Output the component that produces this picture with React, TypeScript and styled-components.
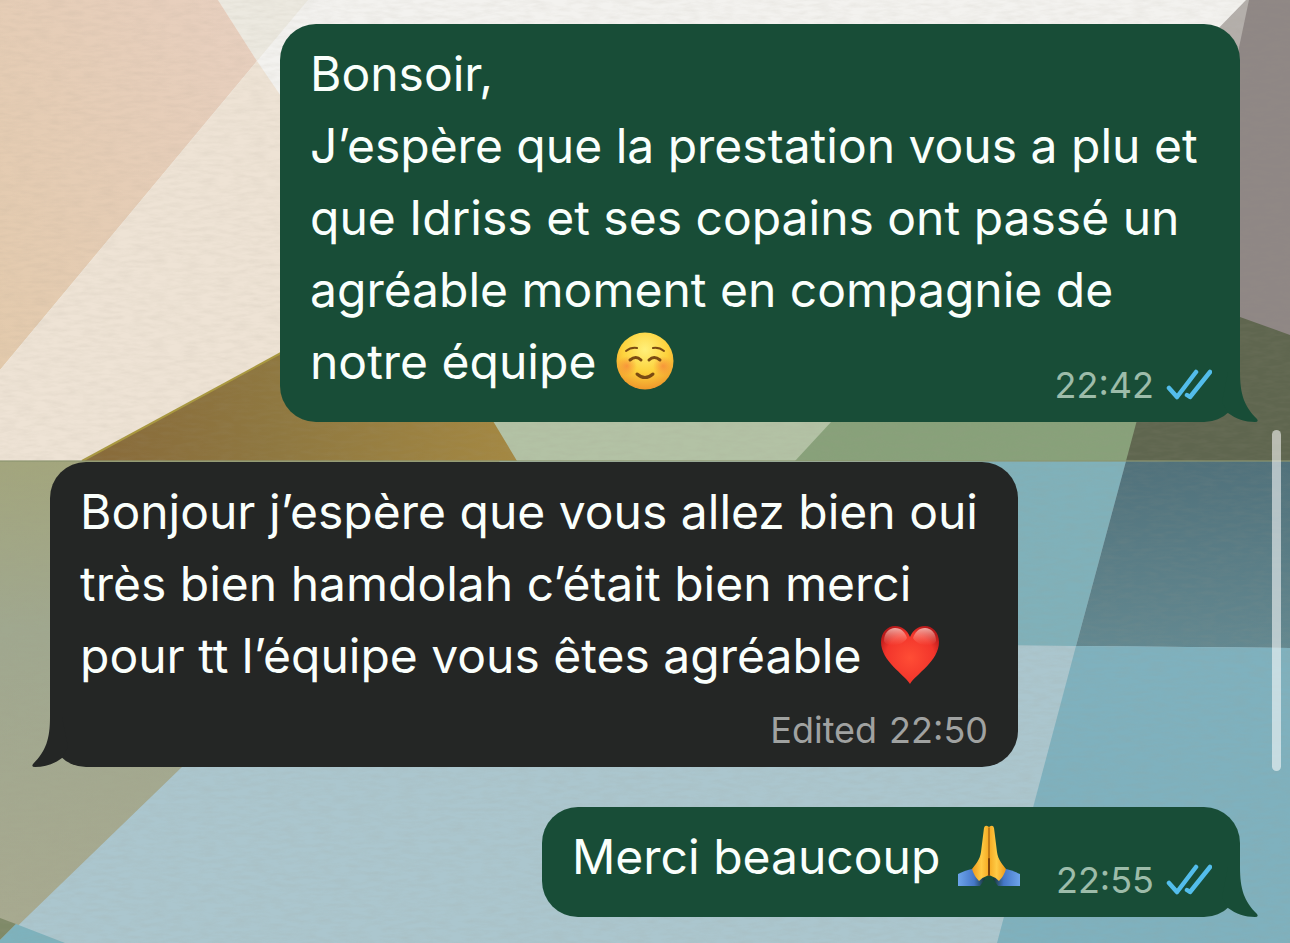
import React from "react";
import styled, { createGlobalStyle } from "styled-components";

const GlobalStyle = createGlobalStyle`
  * { box-sizing: border-box; }
  html, body { margin: 0; padding: 0; }
  body { background: #abc5cd; }
`;

const OUT = "#184d37";
const IN = "#242625";

const Screen = styled.main`
  position: relative;
  min-height: 100vh;
  overflow: hidden;
  font-family: Inter, "Liberation Sans", sans-serif;
`;

const Wallpaper = styled.svg`
  position: absolute;
  inset: 0;
  width: 100%;
  height: 100%;
`;

const Thread = styled.ol`
  position: relative;
  display: flex;
  flex-direction: column;
  gap: 40px;
  margin: 0;
  padding: 24px 50px 26px;
  list-style: none;
`;

const Bubble = styled.li<{ $mine?: boolean; $width: number }>`
  position: relative;
  display: grid;
  grid-template-columns: minmax(0, 1fr);
  align-self: ${(p) => (p.$mine ? "flex-end" : "flex-start")};
  width: min(${(p) => p.$width}px, 100%);
  padding: 14px ${(p) => (p.$mine ? 28 : 30)}px 14px 30px;
  border-radius: 36px;
  background: ${(p) => (p.$mine ? OUT : IN)};
`;

const Message = styled.p<{ $stacked?: boolean }>`
  grid-area: 1 / 1;
  margin: 0;
  padding-bottom: ${(p) => (p.$stacked ? 15 : 10)}px;
  color: #fafffc;
  font-size: 48px;
  line-height: 72px;
  white-space: nowrap;
`;

const Meta = styled.div<{ $mine?: boolean; $stacked?: boolean }>`
  grid-area: ${(p) => (p.$stacked ? 2 : 1)} / 1;
  place-self: end;
  display: flex;
  align-items: center;
  gap: 12px;
  color: ${(p) => (p.$mine ? "#9dbcaa" : "#a0a2a1")};
  font-size: 36px;
  line-height: 46px;
`;

const TailShape = styled.svg<{ $mine?: boolean }>`
  position: absolute;
  bottom: 0;
  ${(p) => (p.$mine ? "right: -18px;" : "left: -18px; transform: scaleX(-1);")}
  width: 40px;
  height: 50px;
`;

const Emoji = styled.svg`
  width: 62px;
  height: 62px;
  margin-left: 4px;
  vertical-align: -13px;
`;

const Ticks = styled.svg`
  width: 46px;
  height: 32px;
`;

const ScrollThumb = styled.div`
  position: absolute;
  top: 430px;
  right: 9px;
  width: 9px;
  height: 341px;
  border-radius: 5px;
  background: rgba(255, 255, 255, 0.56);
`;

const Tail = ({ mine }: { mine?: boolean }) => (
  <TailShape $mine={mine} viewBox="0 0 40 50" aria-hidden="true">
    <path
      d="M22 0C22 22 26 34 39 47Q41 50 37 50C27 50 18 47 10 41L4 30L10 0Z"
      fill={mine ? OUT : IN}
    />
  </TailShape>
);

const ReadTicks = () => (
  <Ticks viewBox="0 0 46 32" role="img" aria-label="Lu">
    <g fill="none" stroke="#53bdeb" strokeWidth="4.500" strokeLinecap="round" strokeLinejoin="round">
      <path d="M3 19L11 28L30 3" />
      <path d="M21 26L24 28L44 3" />
    </g>
  </Ticks>
);

const Smile = () => (
  <Emoji viewBox="0 0 62 62" role="img" aria-label="Visage souriant">
    <defs>
      <radialGradient id="face" cx="50%" cy="30%" r="72%">
        <stop offset="0" stopColor="#fff07a" />
        <stop offset="0.55" stopColor="#fdd23c" />
        <stop offset="1" stopColor="#ee942a" />
      </radialGradient>
      <radialGradient id="cheek">
        <stop offset="0" stopColor="#f5793a" stopOpacity="0.65" />
        <stop offset="1" stopColor="#f5793a" stopOpacity="0" />
      </radialGradient>
    </defs>
    <circle cx="31" cy="31" r="28.500" fill="url(#face)" />
    <circle cx="13" cy="36" r="10" fill="url(#cheek)" />
    <circle cx="49" cy="36" r="10" fill="url(#cheek)" />
    <g fill="none" stroke="#7a4a12" strokeLinecap="round">
      <path d="M12 21Q17 17 23 18" strokeWidth="2" />
      <path d="M39 18Q45 17 50 21" strokeWidth="2" />
      <path d="M16 30Q22 25 27 30" strokeWidth="3" />
      <path d="M35 30Q40 25 46 30" strokeWidth="3" />
      <path d="M23 44Q31 51 39 44" strokeWidth="3" />
    </g>
  </Emoji>
);

const Heart = () => (
  <Emoji viewBox="0 0 62 62" role="img" aria-label="Cœur rouge">
    <defs>
      <radialGradient id="heart" cx="50%" cy="55%" r="60%">
        <stop offset="0" stopColor="#ff4d35" />
        <stop offset="0.7" stopColor="#f2352b" />
        <stop offset="1" stopColor="#b8191a" />
      </radialGradient>
      <linearGradient id="gloss" x1="0" y1="0" x2="0" y2="1">
        <stop offset="0" stopColor="#ffd8d0" stopOpacity="0.75" />
        <stop offset="1" stopColor="#ff9a88" stopOpacity="0" />
      </linearGradient>
    </defs>
    <path
      d="M31 60C25 50 2 37 2 18C2 8 9 2 16 2C23 2 28 6 31 13C34 6 39 2 46 2C53 2 60 8 60 18C60 37 37 50 31 60Z"
      fill="url(#heart)"
    />
    <path d="M5 17C5 9 10 4 16 4C22 4 26 8 28 14C24 22 8 24 5 17Z" fill="url(#gloss)" />
    <path d="M57 17C57 9 52 4 46 4C40 4 36 8 34 14C38 22 54 24 57 17Z" fill="url(#gloss)" />
  </Emoji>
);

const Hands = () => (
  <Emoji viewBox="0 0 62 62" role="img" aria-label="Mains jointes">
    <defs>
      <linearGradient id="skin" x1="0" y1="0" x2="1" y2="0">
        <stop offset="0" stopColor="#ee981c" />
        <stop offset="0.55" stopColor="#ffcb45" />
        <stop offset="1" stopColor="#f5a922" />
      </linearGradient>
      <linearGradient id="sleeve" x1="0" y1="0" x2="1" y2="0">
        <stop offset="0" stopColor="#6da4ea" />
        <stop offset="0.6" stopColor="#4577c8" />
        <stop offset="1" stopColor="#16342f" />
      </linearGradient>
    </defs>
    <g id="hand">
      <path d="M0 49Q8 45 14 44L27 54L22 61H0Z" fill="url(#sleeve)" />
      <path
        d="M31 2Q27 -1 26 3L23 27C22 35 17 40 14 44Q16 51 21 56Q25 52 31 50Z"
        fill="url(#skin)"
      />
    </g>
    <use href="#hand" transform="translate(62 0) scale(-1 1)" />
    <path d="M31 3V50" stroke="#b26c12" strokeWidth="1.500" strokeLinecap="round" />
    <path d="M31 34V50" stroke="#7c430c" strokeWidth="2" strokeLinecap="round" />
  </Emoji>
);

const Background = () => (
  <Wallpaper viewBox="0 0 1290 943" preserveAspectRatio="none" aria-hidden="true">
    <defs>
      <linearGradient id="peach" x1="0" y1="1" x2="1" y2="0">
        <stop offset="0" stopColor="#e3caac" />
        <stop offset="1" stopColor="#e8d0c0" />
      </linearGradient>
      <linearGradient id="brown" x1="0" y1="0" x2="1" y2="0">
        <stop offset="0" stopColor="#886a3a" />
        <stop offset="0.45" stopColor="#8f7840" />
        <stop offset="1" stopColor="#a48842" />
      </linearGradient>
      <linearGradient id="moss" x1="0" y1="0" x2="0" y2="1">
        <stop offset="0" stopColor="#a3a67d" />
        <stop offset="0.35" stopColor="#a0a88f" />
        <stop offset="1" stopColor="#a8aa90" />
      </linearGradient>
      <linearGradient id="slate" x1="0" y1="0" x2="0" y2="1">
        <stop offset="0" stopColor="#50717b" />
        <stop offset="1" stopColor="#638890" />
      </linearGradient>
      <filter id="weave" x="0" y="0" width="100%" height="100%">
        <feTurbulence type="fractalNoise" baseFrequency="0.06 0.25" numOctaves="3" seed="4" />
        <feColorMatrix values="0 0 0 0 0.35  0 0 0 0 0.32  0 0 0 0 0.25  0.5 0 0 0 -0.17" />
      </filter>
    </defs>
    <rect width="1290" height="943" fill="#f3f2ef" />
    <path d="M218 0H308L257 61Z" fill="#ece9e0" />
    <path d="M0 0H218L257 61L0 370Z" fill="url(#peach)" />
    <path d="M257 61L420 300V461H0V370Z" fill="#eee3d5" />
    <path d="M1246 0L1210 37V100H1290V0Z" fill="#b4afab" />
    <path d="M1249 0H1290V340H1230V90Z" fill="#8f8785" />
    <path d="M480 400H860V420L797 461H500Z" fill="#b3c2a5" />
    <path d="M832 421H1140V461H795Z" fill="#88a17a" />
    <path d="M1240 317L1290 335V461H1126L1137 420L1200 300Z" fill="#5f664f" />
    <path d="M82 461L281 353L400 280L493 421L517 461Z" fill="url(#brown)" />
    <path d="M82 461L281 353" stroke="#a9983f" strokeWidth="2" />
    <rect y="461" width="1290" height="482" fill="#abc6ce" />
    <path d="M0 461H500L182 767L0 943Z" fill="url(#moss)" />
    <path d="M0 918L16 924L0 940Z" fill="#7f8a68" />
    <path d="M16 924L65 943H0V940Z" fill="#7eb2bd" />
    <path d="M900 461H1126L1076 646L900 644Z" fill="#80b1ba" />
    <path d="M1126 461H1290V648L1076 646Z" fill="url(#slate)" />
    <path d="M1076 646L1290 648V943H997Z" fill="#7fb1be" />
    <path d="M0 461H1290" stroke="#8c9670" strokeWidth="2" opacity="0.6" />
    <rect width="1290" height="943" filter="url(#weave)" opacity="0.400" />
  </Wallpaper>
);

export default function App() {
  return (
    <>
      <GlobalStyle />
      <Screen>
        <Background />
        <Thread>
          <Bubble $mine $width={960}>
            <Tail mine />
            <Message>
              Bonsoir,
              <br />
              J’espère que la prestation vous a plu et
              <br />
              que Idriss et ses copains ont passé un
              <br />
              agréable moment en compagnie de
              <br />
              notre équipe <Smile />
            </Message>
            <Meta $mine>
              <time>22:42</time>
              <ReadTicks />
            </Meta>
          </Bubble>
          <Bubble $width={968}>
            <Tail />
            <Message $stacked>
              Bonjour j’espère que vous allez bien oui
              <br />
              très bien hamdolah c’était bien merci
              <br />
              pour tt l’équipe vous êtes agréable <Heart />
            </Message>
            <Meta $stacked>
              <span>Edited</span>
              <time>22:50</time>
            </Meta>
          </Bubble>
          <Bubble $mine $width={698}>
            <Tail mine />
            <Message>
              Merci beaucoup <Hands />
            </Message>
            <Meta $mine>
              <time>22:55</time>
              <ReadTicks />
            </Meta>
          </Bubble>
        </Thread>
        <ScrollThumb />
      </Screen>
    </>
  );
}
